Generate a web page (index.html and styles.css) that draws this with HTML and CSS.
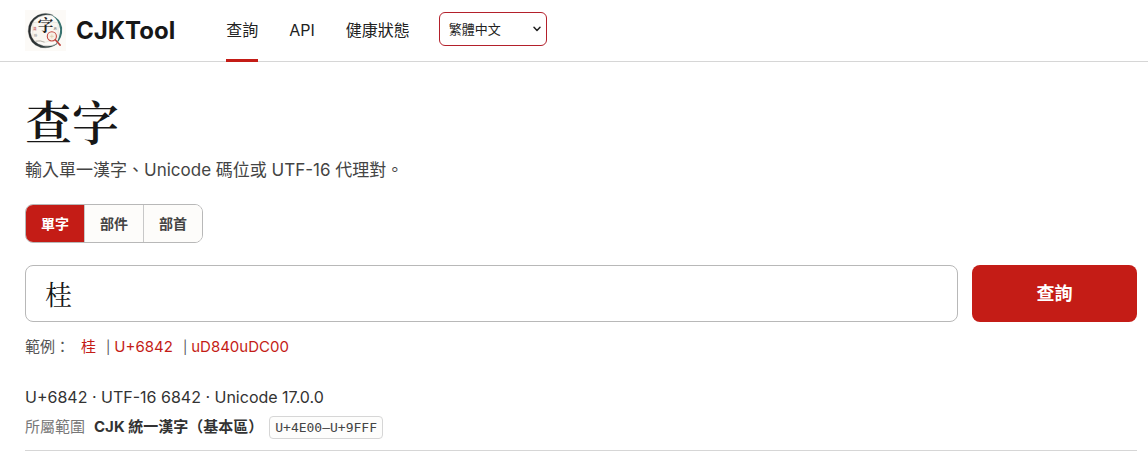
FILE: index.html
```html
<!DOCTYPE html>
<html lang="zh-Hant">
<head>
<meta charset="utf-8">
<meta name="viewport" content="width=device-width, initial-scale=1">
<title>CJKTool</title>
<link rel="stylesheet" href="styles.css">
</head>
<body>
<header class="site-header">
  <a class="brand" href="#">
    <svg class="brand-logo" viewBox="0 0 42 42" aria-hidden="true">
      <defs>
        <linearGradient id="ring" x1="0" y1="0" x2="1" y2="0">
          <stop offset="0" stop-color="#25282a"/>
          <stop offset="0.65" stop-color="#3b4a4a"/>
          <stop offset="1" stop-color="#2f6b68"/>
        </linearGradient>
      </defs>
      <rect width="42" height="42" fill="#fcfaf7"/>
      <path d="M8 13q6-2 13 1q7-3 13-1v19q-7-2-13 1q-7-3-13-1z" fill="#f9f6f0" stroke="#e2ddd4" stroke-width="0.7"/>
      <path d="M29 5.500Q21 1.500 13 5.500Q3 11 3.300 22Q4.500 35 16 38.300Q26 40 33 34.500Q27 38 19 36.800Q7 34 5.500 23Q5 12 14 7Q21 3.500 29 5.500Z" fill="url(#ring)" stroke="#303536" stroke-width="0.300"/>
      <path d="M27 5Q36 8 38 18Q39 29 31 36Q36 28 36 20Q35 10 27 5Z" fill="#397370"/>
      <text class="logo-small logo-red" x="8" y="20">漢</text>
      <text class="logo-small" x="29" y="20">あ</text>
      <text class="logo-small" x="9" y="28">한</text>
      <path d="M11 32q5-1 9 1" fill="none" stroke="#a7a49c" stroke-width="0.800"/>
      <text class="logo-main" x="13" y="22">字</text>
      <circle cx="27.500" cy="27" r="4.700" fill="#f7eee4" fill-opacity="0.850" stroke="#c4463f" stroke-width="1.100"/>
      <path d="M25.500 27h4M27.500 25v4" stroke="#dfc5a2" stroke-width="0.700"/>
      <path d="M31 30.500L36 36" stroke="#bd423c" stroke-width="1.600" stroke-linecap="round"/>
    </svg>
    <span class="brand-name">CJKTool</span>
  </a>
  <nav class="site-nav">
    <a class="nav-link is-active" href="#" aria-current="page">查詢</a>
    <a class="nav-link" href="#">API</a>
    <a class="nav-link" href="#">健康狀態</a>
  </nav>
  <div class="language">
    <select class="language-select" aria-label="語言">
      <option>繁體中文</option>
      <option>English</option>
    </select>
    <svg class="language-arrow" viewBox="0 0 8 6" aria-hidden="true"><path d="M1 1.200L4 4.400L7 1.200"/></svg>
  </div>
</header>
<main class="page">
  <h1 class="title">查字</h1>
  <p class="lead">輸入單一漢字、Unicode 碼位或 UTF-16 代理對。</p>
  <div class="modes">
    <button class="mode is-active" type="button" aria-pressed="true">單字</button>
    <button class="mode" type="button" aria-pressed="false">部件</button>
    <button class="mode" type="button" aria-pressed="false">部首</button>
  </div>
  <form class="search">
    <input class="search-input" type="text" value="桂" aria-label="查字">
    <button class="search-button" type="submit">查詢</button>
  </form>
  <div class="examples">
    <span class="examples-label">範例：</span>
    <a class="example" href="#">桂</a>
    <span class="separator">|</span>
    <a class="example" href="#">U+6842</a>
    <span class="separator">|</span>
    <a class="example" href="#">uD840uDC00</a>
  </div>
  <section class="result">
    <p class="codes">U+6842 · UTF-16 6842 · Unicode 17.0.0</p>
    <div class="block">
      <span class="block-label">所屬範圍</span>
      <strong class="block-name">CJK 統一漢字（基本區）</strong>
      <code class="block-range">U+4E00–U+9FFF</code>
    </div>
  </section>
</main>
</body>
</html>
```
FILE: styles.css
```css
* {
  box-sizing: border-box;
}

body {
  margin: 0;
  background: #fff;
  color: #333;
  font-family: Inter, "Noto Sans CJK TC", sans-serif;
  font-size: 16px;
  line-height: 24px;
}

a {
  color: inherit;
  text-decoration: none;
}

button,
input,
select {
  font: inherit;
}

.site-header {
  display: flex;
  align-items: center;
  height: 62px;
  padding: 0 25px;
  border-bottom: 1px solid #d6d6d6;
}

.brand {
  display: flex;
  align-items: center;
  gap: 10px;
  margin-right: 51px;
}

.brand-logo {
  width: 41px;
  height: 41px;
}

.logo-main {
  font-family: "Noto Serif CJK TC", "Noto Sans CJK TC", serif;
  font-size: 16px;
  font-weight: 700;
  fill: #222;
}

.logo-small {
  font-family: "Noto Sans CJK TC", "Noto Sans CJK KR", sans-serif;
  font-size: 4px;
  fill: #777;
}

.logo-red {
  fill: #c4463f;
}

.brand-name {
  color: #171717;
  font-size: 24px;
  font-weight: 700;
}

.site-nav {
  display: flex;
  align-self: stretch;
  gap: 31px;
  margin-right: 29px;
}

.nav-link {
  display: flex;
  align-items: center;
  margin-bottom: -1px;
  border-bottom: 3px solid transparent;
  color: #222;
}

.nav-link.is-active {
  border-bottom-color: #c41c16;
}

.language {
  position: relative;
  margin-bottom: 3px;
}

.language-select {
  display: block;
  width: 108px;
  height: 34px;
  padding: 0 22px 0 9px;
  border: 1px solid #b3202b;
  border-radius: 6px;
  background: #fff;
  color: #222;
  font-size: 13px;
  appearance: none;
}

.language-arrow {
  position: absolute;
  top: 14px;
  right: 6px;
  width: 8px;
  height: 6px;
  fill: none;
  stroke: #222;
  stroke-width: 1.5;
  stroke-linecap: round;
  stroke-linejoin: round;
  pointer-events: none;
}

.page {
  padding: 28px 11px 0 25px;
}

.title {
  margin: 0 0 6px;
  color: #171717;
  font-family: "Noto Serif CJK TC", "Noto Sans CJK TC", serif;
  font-size: 47px;
  font-weight: 600;
  line-height: 60px;
}

.lead {
  margin: 0 0 19px;
  color: #444;
  font-size: 17px;
  line-height: 29px;
}

.modes {
  display: flex;
  width: fit-content;
  height: 39px;
  overflow: hidden;
  border: 1px solid #b8b8b8;
  border-radius: 8px;
}

.mode {
  padding: 0 15px;
  border: 0;
  border-left: 1px solid #c8c8c8;
  background: #fdfcfa;
  color: #444;
  font-size: 14px;
  font-weight: 700;
}

.mode:first-child {
  border-left: 0;
}

.mode.is-active {
  background: #c41c16;
  color: #fff;
}

.search {
  display: flex;
  gap: 14px;
  margin-top: 22px;
}

.search-input {
  flex: 1;
  min-width: 0;
  height: 57px;
  padding: 0 19px;
  border: 1px solid #b8b8b8;
  border-radius: 8px;
  background: #fff;
  color: #171717;
  font-family: "Noto Serif CJK TC", "Noto Sans CJK TC", serif;
  font-size: 27px;
}

.search-button {
  width: 165px;
  border: 0;
  border-radius: 8px;
  background: #c41c16;
  color: #fff;
  font-size: 18px;
  font-weight: 700;
}

.examples {
  display: flex;
  margin-top: 13px;
  color: #555;
  font-size: 15px;
}

.examples-label {
  margin-right: 11px;
}

.example {
  color: #c41c16;
}

.separator {
  margin: 0 4px 0 10px;
  font-size: 13px;
}

.result {
  margin-top: 26px;
  padding-bottom: 11px;
  border-bottom: 1px solid #d6d6d6;
}

.codes {
  margin: 0 0 6px;
}

.block {
  display: flex;
  align-items: center;
  font-size: 15px;
}

.block-label {
  color: #777;
}

.block-name {
  margin: 0 6px 0 9px;
}

.block-range {
  padding: 0 5px;
  border: 1px solid #d6d6d6;
  border-radius: 4px;
  background: #fdfdfc;
  color: #444;
  font-family: "DejaVu Sans Mono", monospace;
  font-size: 13px;
  line-height: 21px;
}
```
